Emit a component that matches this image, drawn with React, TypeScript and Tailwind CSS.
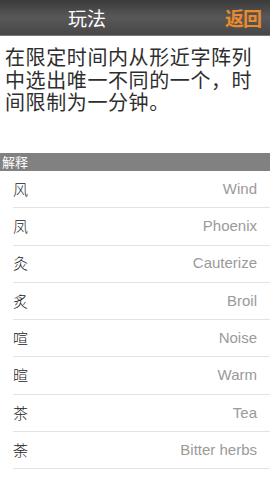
import React from 'react';

const words = [
  { ch: '风', en: 'Wind' },
  { ch: '凤', en: 'Phoenix' },
  { ch: '灸', en: 'Cauterize' },
  { ch: '炙', en: 'Broil' },
  { ch: '喧', en: 'Noise' },
  { ch: '暄', en: 'Warm' },
  { ch: '茶', en: 'Tea' },
  { ch: '荼', en: 'Bitter herbs' },
];

export default function App() {
  return (
    <div className="w-[270px] h-[480px] bg-white overflow-hidden flex flex-col font-['Noto_Sans_CJK_SC','Noto_Sans',sans-serif]">
      {/* Header */}
      <div className="h-[36px] shrink-0 flex items-center bg-gradient-to-b from-[#3b3b3b] via-[#585858] to-[#474747] border-b border-[#777]">
        <div className="w-[68px]" />
        <div className="flex-1 text-white text-[19px] leading-none">玩法</div>
        <div className="pr-[9px] text-[#ea8a2c] text-[19px] font-bold leading-none tracking-[-1px]">返回</div>
      </div>

      {/* Description */}
      <div className="h-[117px] shrink-0 pl-[5px] pr-[12px] pt-[10px] text-[#2e2e2e] text-[20px] leading-[22.6px] tracking-[0.6px]">
        在限定时间内从形近字阵列中选出唯一不同的一个，时间限制为一分钟。
      </div>

      {/* Section bar */}
      <div className="h-[18px] shrink-0 bg-[#818181] text-white text-[13px] leading-[18px] pl-[2px]">解释</div>

      {/* List */}
      <div className="flex flex-col">
        {words.map((w) => (
          <div key={w.en} className="h-[37.3px] ml-[13px] pr-[13px] flex items-center justify-between border-b border-[#e3e3e3] box-border">
            <span className="text-[#222] text-[15px] font-light">{w.ch}</span>
            <span className="text-[#9a9a9a] text-[15px] font-['Liberation_Sans',Arial,sans-serif]">{w.en}</span>
          </div>
        ))}
      </div>
    </div>
  );
}
